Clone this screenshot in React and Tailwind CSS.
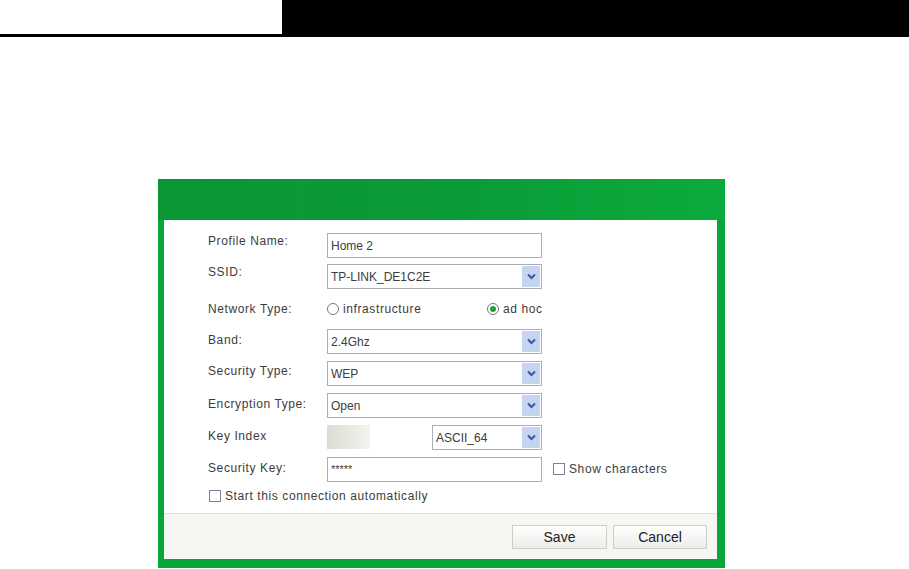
import React from "react";

const Chevron = () => (
  <div className="flex h-full w-[18px] items-center justify-center bg-[#c6d3f1]">
    <svg width="9" height="7" viewBox="0 0 9 7">
      <path d="M1 1.5 L4.5 5 L8 1.5" fill="none" stroke="#3d55a8" strokeWidth="2" />
    </svg>
  </div>
);

const Select = ({ value, className = "" }) => (
  <div
    className={`flex h-[25px] items-stretch border border-[#a9aeb8] bg-white pl-[3px] pr-[1px] py-[1px] tracking-normal ${className}`}
  >
    <span className="flex-1 self-center">{value}</span>
    <Chevron />
  </div>
);

const Row = ({ label, children, h = "h-[32px]", pad = "pt-[1px]" }) => (
  <div className={`flex items-start ${h}`}>
    <div className={`w-[119px] leading-[14px] ${pad}`}>{label}</div>
    <div className="flex flex-1 items-start">{children}</div>
  </div>
);

const Radio = ({ checked }) => (
  <span className="mr-[4px] flex h-[12px] w-[12px] items-center justify-center rounded-full border border-[#737a86] bg-white">
    {checked && <span className="h-[6px] w-[6px] rounded-full bg-[#2e9a3a]" />}
  </span>
);

const Check = () => (
  <span className="mr-[4px] inline-block h-[12px] w-[12px] border border-[#7a7f96] bg-white" />
);

export default function App() {
  return (
    <div
      className="h-[569px] w-[909px] overflow-hidden bg-white text-[12px] tracking-[0.6px] text-[#3c3c3c]"
      style={{ fontFamily: '"Liberation Sans", Arial, sans-serif' }}
    >
      <div className="flex h-[37px]">
        <div className="w-[282px] border-b-[3px] border-black bg-white" />
        <div className="flex-1 bg-black" />
      </div>

      <div className="ml-[158px] mt-[142px] flex h-[389px] w-[567px] flex-col bg-[#0aa63c]">
        <div className="h-[41px] bg-gradient-to-r from-[#0c9634] via-[#0a9a36] to-[#0aab3e]" />
        <div className="mb-[9px] ml-[6px] mr-[8px] flex flex-1 flex-col bg-white">
          <div className="flex-1 pl-[44px] pr-[30px] pt-[13px]">
            <Row label="Profile Name:" h="h-[31px]">
              <div className="flex h-[25px] w-[215px] items-center border border-[#a9aeb8] pl-[3px] tracking-normal">
                Home 2
              </div>
            </Row>
            <Row label="SSID:" h="h-[32px]">
              <Select value="TP-LINK_DE1C2E" className="w-[215px]" />
            </Row>
            <div className="flex h-[33px] items-center pb-[8px] leading-[14px]">
              <div className="w-[119px]">Network Type:</div>
              <div className="flex w-[160px] items-center pt-[1px]">
                <Radio />
                <span>infrastructure</span>
              </div>
              <div className="flex items-center pt-[1px]">
                <Radio checked />
                <span>ad hoc</span>
              </div>
            </div>
            <Row label="Band:" pad="pt-[4px]">
              <Select value="2.4Ghz" className="w-[215px]" />
            </Row>
            <Row label="Security Type:" pad="pt-[3px]">
              <Select value="WEP" className="w-[215px]" />
            </Row>
            <Row label="Encryption Type:" pad="pt-[4px]">
              <Select value="Open" className="w-[215px]" />
            </Row>
            <Row label="Key Index" pad="pt-[4px]">
              <div className="h-[24px] w-[43px] bg-gradient-to-r from-[#dcdcd4] to-[#f3f3ef]" />
              <Select value="ASCII_64" className="ml-[62px] w-[110px]" />
            </Row>
            <Row label="Security Key:" pad="pt-[4px]">
              <div className="flex h-[25px] w-[215px] items-center border border-[#a9aeb8] pl-[3px] text-[11px] tracking-normal">
                *****
              </div>
              <div className="ml-[11px] flex items-center pt-[5px] leading-[14px]">
                <Check />
                <span>Show characters</span>
              </div>
            </Row>
            <div className="flex items-center pl-[1px] leading-[14px]">
              <Check />
              <span>Start this connection automatically</span>
            </div>
          </div>
          <div className="flex h-[46px] items-center justify-end gap-[6px] border-t border-[#e2e2dc] bg-[#f6f6f2] pr-[10px] pt-[1px] tracking-normal">
            <button className="h-[24px] w-[95px] border border-[#cfcfca] bg-gradient-to-b from-white to-[#ececea] text-[14px] text-[#222]">
              Save
            </button>
            <button className="h-[24px] w-[94px] border border-[#cfcfca] bg-gradient-to-b from-white to-[#ececea] text-[14px] text-[#222]">
              Cancel
            </button>
          </div>
        </div>
      </div>
    </div>
  );
}
